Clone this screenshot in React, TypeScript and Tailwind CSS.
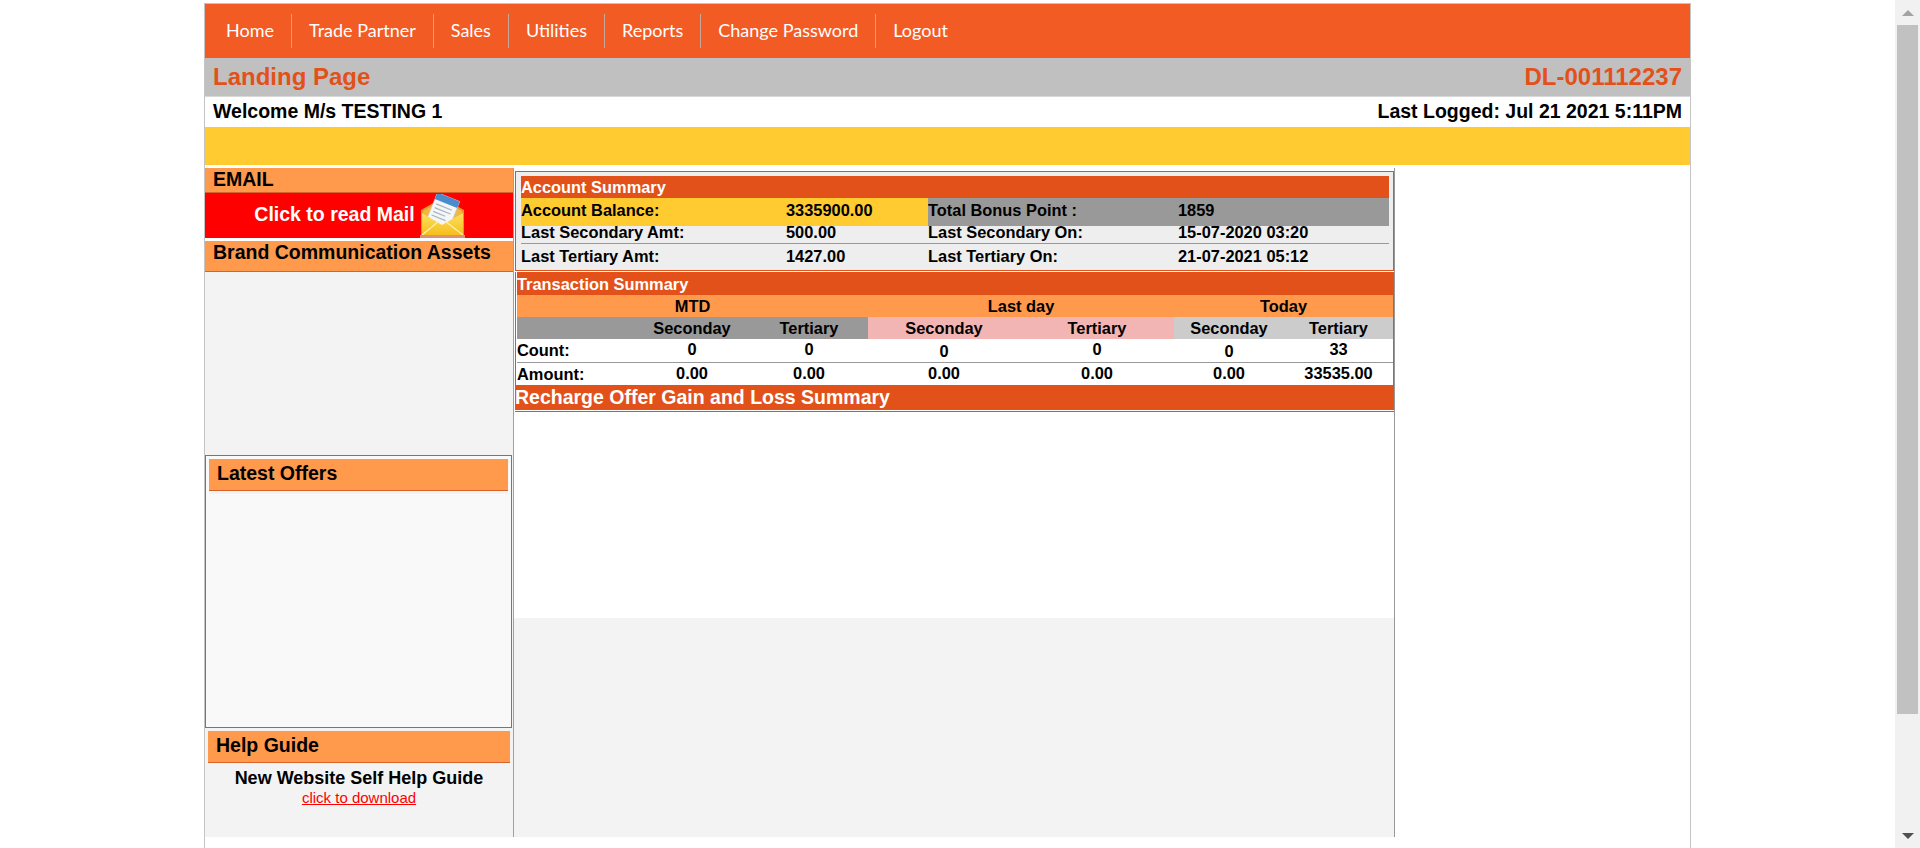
import React from 'react';

const navItems = ['Home', 'Trade Partner', 'Sales', 'Utilities', 'Reports', 'Change Password', 'Logout'];

const MailIcon: React.FC = () => (
  <svg width="45" height="44" viewBox="0 0 45 44">
    <defs>
      <linearGradient id="env" x1="0" y1="0" x2="0" y2="1">
        <stop offset="0" stopColor="#ffdf5e" />
        <stop offset="1" stopColor="#f5bf1c" />
      </linearGradient>
    </defs>
    <path d="M1 16 L22 4 L44 16 L44 42 L1 42 Z" fill="#d99a2b" />
    <path d="M3 17 L22 6 L42 17 L42 40 L3 40 Z" fill="#f0b840" />
    <g transform="rotate(22 23 17)">
      <rect x="11" y="2" width="24" height="30" fill="#f4f6f8" stroke="#c5ccd4" strokeWidth="0.6" />
      <rect x="11" y="2" width="24" height="7" fill="#4a8ccb" />
      <path d="M14 13 H31 M14 17 H31 M14 21 H27 M14 25 H29" stroke="#a9b4bf" strokeWidth="1.2" />
    </g>
    <path d="M2 19 L22 31 L43 19 L43 41 L2 41 Z" fill="url(#env)" />
    <path d="M2 41 L19 27 M43 41 L25 27" stroke="#fff0b0" strokeWidth="1.2" fill="none" />
    <rect x="0" y="41" width="45" height="3" fill="#e08f74" />
  </svg>
);

const SideHead: React.FC<{ title: string; className: string }> = ({ title, className }) => (
  <div className={`bg-[#ff9a4d] text-black font-bold text-[19.5px] border-b border-[#d9622b] ${className}`}>{title}</div>
);

const AccountRow: React.FC<{ cells: string[]; className?: string; leftBg?: string; rightBg?: string; cellPad?: string }> = ({
  cells,
  className = '',
  leftBg = '',
  rightBg = '',
  cellPad = 'pb-[2px]',
}) => (
  <div className={`grid grid-cols-[265px_142px_250px_211px] ${className}`}>
    <div className={`${leftBg} ${cellPad} flex items-center`}>{cells[0]}</div>
    <div className={`${leftBg} ${cellPad} flex items-center`}>{cells[1]}</div>
    <div className={`${rightBg} ${cellPad} flex items-center`}>{cells[2]}</div>
    <div className={`${rightBg} ${cellPad} flex items-center`}>{cells[3]}</div>
  </div>
);

const transColumns = 'grid grid-cols-[117px_116px_118px_152px_154px_110px_109px]';

const App: React.FC = () => {
  return (
    <div className="flex h-[848px] overflow-hidden bg-white font-['Liberation_Sans',Arial,sans-serif] text-black">
      <div className="flex-1 min-w-0 px-[204px] pt-[3px]">
        <div className="h-[845px] border-x border-t border-[#c4c4c4]">
          {/* top menu */}
          <nav className="h-[54px] bg-[#f35b25] flex items-center pl-[4px] font-['Lato',sans-serif] text-[18px] text-white">
            {navItems.map((item, i) => (
              <div
                key={item}
                className={`h-[34px] flex items-center pl-[17px] pr-[17px] pb-[2px] ${
                  i < navItems.length - 1 ? 'border-r border-[#c9a898]' : ''
                }`}
              >
                {item}
              </div>
            ))}
          </nav>

          <div className="h-[39px] bg-[#c0c0c0] border-b border-[#d8d8d8] flex items-center justify-between px-[8px] text-[#e2511a] text-[24px] font-bold">
            <span>Landing Page</span>
            <span>DL-001112237</span>
          </div>
          <div className="h-[30px] flex items-center justify-between px-[8px] text-[19.5px] font-bold">
            <span>Welcome M/s TESTING 1</span>
            <span>Last Logged: Jul 21 2021 5:11PM</span>
          </div>
          <div className="h-[38px] bg-[#ffcb31]" />

          <div className="mt-[3px] flex h-[669px]">
            {/* left column */}
            <aside className="w-[309px] shrink-0 bg-[#f3f3f3] border-r border-[#a0a0a0] flex flex-col">
              <SideHead title="EMAIL" className="h-[25px] pl-[8px] leading-[23px]" />
              <div className="h-[45px] bg-[#ff0000] flex items-center justify-center gap-[5px] pl-[1px] text-white text-[19.5px] font-bold">
                <span className="pb-[2px]">Click to read Mail</span>
                <MailIcon />
              </div>
              <div className="h-[3px] bg-white" />
              <SideHead title="Brand Communication Assets" className="h-[31px] pl-[8px] leading-[22px]" />

              <div className="mt-[183px] mr-[1px] h-[273px] border border-[#b8603a] px-[3px] pt-[3px] bg-[#f9f9f9]">
                <div className="bg-[#f3f3f3] pb-[3px]">
                  <SideHead title="Latest Offers" className="h-[32px] pl-[8px] leading-[29px]" />
                </div>
              </div>

              <div className="mt-[3px] mx-[3px]">
                <SideHead title="Help Guide" className="h-[32px] pl-[8px] leading-[28px]" />
              </div>
              <div className="mt-[5px] text-center text-[18px] font-bold leading-[20px]">New Website Self Help Guide</div>
              <a href="#" className="text-center text-[#ff0000] text-[15px] underline leading-[20px]">
                click to download
              </a>
            </aside>

            {/* summary column */}
            <main className="w-[881px] shrink-0 border-r border-[#999] bg-[#f3f3f3] text-[16.4px] font-bold">
              <div className="h-[450px] bg-white pt-[3px] pl-[1px]">
                <div className="h-[100px] border border-[#e2511a] bg-[#eeeeee] pl-[5px] pt-[4px] pr-[4px]">
                  <div className="h-[22px] bg-[#e2511a] text-white flex items-center">Account Summary</div>
                  <AccountRow
                    className="h-[22px]"
                    leftBg="bg-[#ffcb31]"
                    rightBg="bg-[#999999]"
                    cellPad="pb-[3px]"
                    cells={['Account Balance:', '3335900.00', 'Total Bonus Point :', '1859']}
                  />
                  <AccountRow
                    className="h-[24px] border-b border-[#999]"
                    cellPad="pb-[3px]"
                    cells={['Last Secondary Amt:', '500.00', 'Last Secondary On:', '15-07-2020 03:20']}
                  />
                  <AccountRow
                    className="h-[26px]"
                    cells={['Last Tertiary Amt:', '1427.00', 'Last Tertiary On:', '21-07-2021 05:12']}
                  />
                </div>

                <div className="mt-[1px] border-x border-[#e2511a] pl-[1px]">
                  <div className="h-[23px] border-t border-[#e2511a] bg-[#e2511a] text-white flex items-center">Transaction Summary</div>
                  <div className={`${transColumns} h-[22px] bg-[#ff9a4d] text-center leading-[22px]`}>
                    <div className="col-span-3">MTD</div>
                    <div className="col-span-2">Last day</div>
                    <div className="col-span-2">Today</div>
                  </div>
                  <div className={`${transColumns} h-[22px] text-center leading-[22px]`}>
                    <div className="bg-[#999999]" />
                    <div className="bg-[#999999]">Seconday</div>
                    <div className="bg-[#999999]">Tertiary</div>
                    <div className="bg-[#f3b4b4]">Seconday</div>
                    <div className="bg-[#f3b4b4]">Tertiary</div>
                    <div className="bg-[#cccccc]">Seconday</div>
                    <div className="bg-[#cccccc]">Tertiary</div>
                  </div>
                  <div className={`${transColumns} h-[24px] border-b border-[#999] text-center leading-[20px]`}>
                    <div className="text-left pt-[1px]">Count:</div>
                    <div>0</div>
                    <div>0</div>
                    <div className="pt-[2px]">0</div>
                    <div>0</div>
                    <div className="pt-[2px]">0</div>
                    <div>33</div>
                  </div>
                  <div className={`${transColumns} h-[22px] text-center leading-[20px]`}>
                    <div className="text-left pt-[1px]">Amount:</div>
                    <div>0.00</div>
                    <div>0.00</div>
                    <div>0.00</div>
                    <div>0.00</div>
                    <div>0.00</div>
                    <div>33535.00</div>
                  </div>
                </div>
                <div className="h-[25px] bg-[#e2511a] text-white text-[19.5px] leading-[24px]">
                  Recharge Offer Gain and Loss Summary
                </div>
                <div className="mt-[1px] h-[1px] bg-[#e2511a]" />
              </div>
            </main>
          </div>
        </div>
      </div>

      {/* browser scrollbar */}
      <div className="w-[25px] shrink-0 bg-[#f1f1f1] flex flex-col items-center">
        <div className="h-[25px] flex items-center justify-center">
          <div className="w-0 h-0 border-x-[6px] border-x-transparent border-b-[6px] border-b-[#a3a3a3]" />
        </div>
        <div className="h-[689px] w-[21px] bg-[#c1c1c1]" />
        <div className="flex-1 w-full flex items-end justify-center pb-[9px]">
          <div className="w-0 h-0 border-x-[6px] border-x-transparent border-t-[6px] border-t-[#505050]" />
        </div>
      </div>
    </div>
  );
};

export default App;
